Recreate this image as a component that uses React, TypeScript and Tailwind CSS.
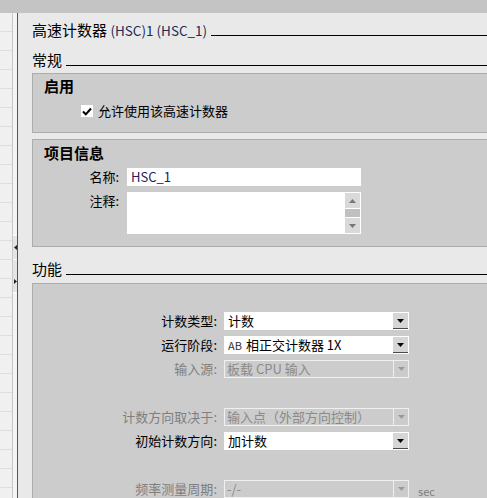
import React from "react";

const Tri = ({ dir, color, w = 7, h = 4 }: { dir: "up" | "down" | "left" | "right"; color: string; w?: number; h?: number }) => {
  let pts = "";
  if (dir === "down") pts = `0,0 ${w},0 ${w / 2},${h}`;
  if (dir === "up") pts = `0,${h} ${w},${h} ${w / 2},0`;
  if (dir === "left") pts = `${w},0 ${w},${h} 0,${h / 2}`;
  if (dir === "right") pts = `0,0 0,${h} ${w},${h / 2}`;
  return (
    <svg width={w} height={h} viewBox={`0 0 ${w} ${h}`} className="block">
      <polygon points={pts} fill={color} />
    </svg>
  );
};

function Header({ text, latin, mb, mt }: { text: string; latin?: string; mb: string; mt: string }) {
  return (
    <div className={`flex items-end ${mt}`}>
      <span className="text-[15px] leading-[15px] text-black whitespace-nowrap">
        {text}
        {latin && <span className="text-[13.5px] text-[#1c2a55]">{latin}</span>}
      </span>
      <div className={`flex-1 h-px bg-black ml-[4px] ${mb}`} />
    </div>
  );
}

function Select({ value, disabled, prefix }: { value: string; disabled?: boolean; prefix?: string }) {
  if (disabled) {
    return (
      <div className="h-[18px] w-[185px] flex border border-[#f0f0f0] bg-[#cccccc]">
        <div className="flex-1 pl-[2px] text-[13px] leading-[16px] text-[#8a8a8a] whitespace-nowrap">{value}</div>
        <div className="w-[15px] border-l border-[#f0f0f0] flex items-center justify-center">
          <Tri dir="down" color="#9a9a9a" />
        </div>
      </div>
    );
  }
  return (
    <div className="h-[18px] w-[185px] flex bg-white p-[1px]">
      <div className="flex-1 pl-[3px] text-[13px] leading-[16px] text-black whitespace-nowrap flex items-center">
        {prefix && <span className="text-[11px] mr-[4px] text-[#333]">{prefix}</span>}
        <span>{value}</span>
      </div>
      <div className="w-[15px] bg-[#d6d6d6] border-b border-[#4a4a4a] flex items-center justify-center">
        <Tri dir="down" color="#000" />
      </div>
    </div>
  );
}

function Row({ label, value, disabled, prefix, unit, mt }: { label: string; value: string; disabled?: boolean; prefix?: string; unit?: string; mt: string }) {
  return (
    <div className={`flex items-center h-[18px] ${mt}`}>
      <div className={`w-[184px] text-right text-[13px] leading-[18px] whitespace-nowrap ${disabled ? "text-[#7f7f7f]" : "text-black"}`}>
        {label}:
      </div>
      <div className="ml-[7px]">
        <Select value={value} disabled={disabled} prefix={prefix} />
      </div>
      {unit && <span className="ml-[9px] text-[11px] text-[#7f7f7f] leading-[18px] mt-[3px]">{unit}</span>}
    </div>
  );
}

export default function App() {
  const rows = Array.from({ length: 27 });
  return (
    <div className="w-[487px] h-[498px] overflow-hidden bg-[#e9e9e9] flex flex-col font-['Noto_Sans_CJK_SC','Noto_Sans',sans-serif]">
      <div className="h-[13px] shrink-0 bg-[#c4c4c4]" />
      <div className="flex flex-1 min-h-0">
        {/* left navigation strip */}
        <div className="w-[12px] shrink-0 bg-[#f0f0f0] flex flex-col overflow-hidden">
          {rows.map((_, i) => (
            <div key={i} className="h-[19px] shrink-0 border-b border-[#dedede]" />
          ))}
        </div>
        <div className="w-[5px] shrink-0 border-l border-[#c8c8c8] bg-[#f4f4f4] flex flex-col">
          <div className="h-[222px] shrink-0" />
          <div className="h-[25px] shrink-0 border-t border-b border-white bg-[#e4e4e4] flex items-center justify-center">
            <Tri dir="left" color="#222" w={3} h={5} />
          </div>
          <div className="h-[33px] shrink-0 border-b border-white bg-[#e4e4e4] flex items-start justify-center pt-[19px]">
            <Tri dir="right" color="#222" w={3} h={5} />
          </div>
        </div>
        <div className="w-px shrink-0 bg-[#555555]" />

        {/* main */}
        <div className="flex-1 min-w-0 overflow-hidden pl-[14px] flex flex-col">
          <Header text="高速计数器 " latin="(HSC)1 (HSC_1)" mt="mt-[9px]" mb="mb-[2px]" />
          <Header text="常规" mt="mt-[14px]" mb="mb-[1px]" />

          {/* 启用 */}
          <div className="mt-[6px] h-[60px] mr-[-4px] border border-[#acacac] bg-[#cccccc] shrink-0">
            <div className="pl-[11px] pt-[4px] text-[15px] leading-[15px] font-bold text-black">启用</div>
            <div className="flex items-center mt-[11px] pl-[48px]">
              <div className="w-[12px] h-[12px] bg-white flex items-center justify-center">
                <svg width="10" height="9" viewBox="0 0 10 9">
                  <path d="M1 4.5 L3.8 7.3 L9 1.5" stroke="#000" strokeWidth="2" fill="none" />
                </svg>
              </div>
              <span className="ml-[5px] text-[13px] leading-[14px] text-black">允许使用该高速计数器</span>
            </div>
          </div>

          {/* 项目信息 */}
          <div className="mt-[6px] h-[108px] mr-[-4px] border border-[#acacac] bg-[#cccccc] shrink-0">
            <div className="pl-[11px] pt-[5px] text-[15px] leading-[15px] font-bold text-black">项目信息</div>
            <div className="flex mt-[8px]">
              <div className="w-[86px] text-right text-[13px] leading-[18px] text-black">名称:</div>
              <div className="ml-[8px] w-[234px] h-[18px] bg-white pl-[4px] text-[13px] leading-[18px] text-[#2a1a55]">HSC_1</div>
            </div>
            <div className="flex mt-[6px]">
              <div className="w-[86px] text-right text-[13px] leading-[18px] text-black">注释:</div>
              <div className="ml-[8px] w-[234px] h-[42px] bg-white flex justify-end p-[1px]">
                <div className="w-[15px] flex flex-col gap-[1px]">
                  <div className="h-[15px] bg-[#d9d9d9] flex items-center justify-center">
                    <Tri dir="up" color="#777" />
                  </div>
                  <div className="h-[8px] bg-[#c0c0c0]" />
                  <div className="h-[15px] bg-[#d9d9d9] flex items-center justify-center">
                    <Tri dir="down" color="#777" />
                  </div>
                </div>
              </div>
            </div>
          </div>

          <Header text="功能" mt="mt-[14px]" mb="mb-[1px]" />

          {/* 功能 panel */}
          <div className="mt-[7px] flex-1 mr-[-4px] border border-[#acacac] border-b-0 bg-[#cccccc] pt-[28px]">
            <Row label="计数类型" value="计数" mt="mt-0" />
            <Row label="运行阶段" value="相正交计数器 1X" prefix="AB" mt="mt-[6px]" />
            <Row label="输入源" value="板载 CPU 输入" disabled mt="mt-[6px]" />
            <Row label="计数方向取决于" value="输入点（外部方向控制）" disabled mt="mt-[30px]" />
            <Row label="初始计数方向" value="加计数" mt="mt-[6px]" />
            <Row label="频率测量周期" value="-/-" disabled unit="sec" mt="mt-[30px]" />
          </div>
        </div>
      </div>
    </div>
  );
}
